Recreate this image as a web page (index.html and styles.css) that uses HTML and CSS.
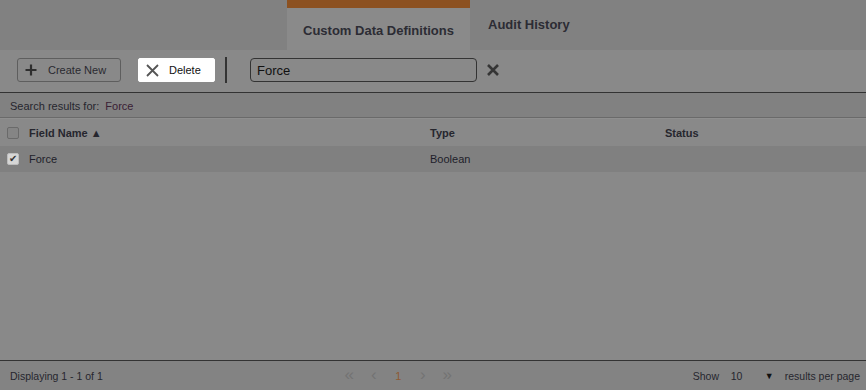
FILE: index.html
```
<!DOCTYPE html>
<html lang="en">
<head>
    <meta charset="UTF-8">
    <meta name="viewport" content="width=device-width, initial-scale=1.0">
    <title>Custom Data Definitions</title>
    <link rel="stylesheet" href="styles.css">
</head>
<body>
    <div class="page">
        <div class="tabs">
            <div class="tab active">Custom Data Definitions</div>
            <div class="tab">Audit History</div>
        </div>

        <div class="toolbar">
            <button class="tool-btn">
                <svg width="12" height="12" viewBox="0 0 12 12"><path d="M6 0.5V11.5M0.5 6H11.5" stroke="#2e2e2e" stroke-width="2.2"/></svg>
                <span>Create New</span>
            </button>
            <button class="tool-btn delete-btn">
                <svg width="13" height="13" viewBox="0 0 13 13"><path d="M1 1L12 12M12 1L1 12" stroke="#555" stroke-width="1.8"/></svg>
                <span>Delete</span>
            </button>
            <div class="divider"></div>
            <div class="search-box">Force</div>
            <svg class="clear-icon" width="12" height="12" viewBox="0 0 12 12"><path d="M1 1L11 11M11 1L1 11" stroke="#353535" stroke-width="2.6"/></svg>
        </div>

        <div class="search-info">Search results for: <span class="term">Force</span></div>

        <div class="grid">
            <div class="grid-row grid-head">
                <div class="cell"><span class="check"></span></div>
                <div class="cell">Field Name <span class="sort">&#9650;</span></div>
                <div class="cell">Type</div>
                <div class="cell">Status</div>
            </div>
            <div class="grid-row selected">
                <div class="cell"><span class="check checked">&#10004;</span></div>
                <div class="cell">Force</div>
                <div class="cell">Boolean</div>
                <div class="cell"></div>
            </div>
        </div>

        <div class="footer">
            <div class="count">Displaying 1 - 1 of 1</div>
            <div class="pager">
                <span>&laquo;</span>
                <span>&lsaquo;</span>
                <span class="current">1</span>
                <span>&rsaquo;</span>
                <span>&raquo;</span>
            </div>
            <div class="page-size">
                <span class="show">Show</span>
                <span class="size">10</span>
                <span class="arrow">&#9660;</span>
                <span>results per page</span>
            </div>
        </div>
    </div>
</body>
</html>
```

FILE: styles.css
```
* {
    margin: 0;
    padding: 0;
    box-sizing: border-box;
}

body {
    font-family: "Liberation Sans", Arial, sans-serif;
    background: #898989;
    color: #26262e;
}

.page {
    height: 390px;
    display: flex;
    flex-direction: column;
}

/* tabs */
.tabs {
    height: 50px;
    background: #818181;
    display: flex;
    padding-left: 287px;
}

.tab {
    font-size: 13px;
    font-weight: bold;
    padding: 17px 18px 0;
    color: #2c2c34;
}

.tab.active {
    width: 183px;
    background: #8a8a8a;
    border-top: 8px solid #8c5121;
    padding: 15px 0 0;
    text-align: center;
}

/* toolbar */
.toolbar {
    height: 43px;
    display: flex;
    align-items: center;
    padding: 0 0 2px 17px;
    border-bottom: 1px solid #333;
}

.tool-btn {
    height: 24px;
    width: 104px;
    display: flex;
    align-items: center;
    gap: 11px;
    padding: 0 7px;
    font-family: inherit;
    font-size: 11px;
    color: #2a2a30;
    background: transparent;
    border: 1px solid #5e5e5e;
    border-radius: 3px;
}

.delete-btn {
    width: 77px;
    margin-left: 17px;
    background: #fff;
    border-color: #fff;
    border-radius: 2px;
    color: #111;
    gap: 10px;
}

.divider {
    width: 2px;
    height: 26px;
    background: #333;
    margin-left: 10px;
}

.search-box {
    width: 227px;
    height: 24px;
    margin-left: 23px;
    border: 1px solid #333;
    border-radius: 4px;
    padding: 4px 6px;
    font-size: 13px;
    color: #111;
}

.clear-icon {
    margin-left: 10px;
}

/* search info */
.search-info {
    height: 25px;
    background: #818181;
    font-size: 11px;
    padding: 7px 0 0 10px;
    border-bottom: 1px solid #6a6a6a;
}

.term {
    margin-left: 3px;
    color: #3a2035;
}

/* grid */
.grid {
    flex: 1;
}

.grid-row {
    display: grid;
    grid-template-columns: 29px 401px 235px 1fr;
    align-items: center;
    font-size: 11px;
}

.grid-head {
    height: 28px;
    font-weight: bold;
    border-top: 1px solid #8f8f8f;
}

.grid-row.selected {
    height: 26px;
    background: #808080;
    color: #1e1e2a;
}

.check {
    display: block;
    width: 12px;
    height: 12px;
    margin-left: 7px;
    border: 1px solid #6a6a6a;
    border-radius: 2px;
    background: #858585;
    font-size: 10px;
    line-height: 10px;
    text-align: center;
}

.check.checked {
    background: #d6d6d6;
    border-color: #bdbdbd;
    color: #333;
}

.sort {
    font-size: 11px;
}

/* footer */
.footer {
    height: 30px;
    background: #838383;
    border-top: 1px solid #333;
    display: flex;
    align-items: center;
    font-size: 10.5px;
    padding: 0 6px 0 10px;
}

.count {
    width: 327px;
}

.pager {
    display: flex;
    align-items: center;
    color: #737373;
    font-size: 17px;
}

.pager span {
    width: 24.5px;
    height: 18px;
    line-height: 16px;
    text-align: center;
}

.pager .current {
    color: #8e5a33;
    font-size: 11px;
    line-height: 18px;
}

.page-size {
    margin-left: auto;
    display: flex;
    align-items: center;
}

.show {
    width: 38px;
}

.size {
    width: 34px;
}

.arrow {
    font-size: 9px;
    width: 20px;
    color: #111;
}
```
